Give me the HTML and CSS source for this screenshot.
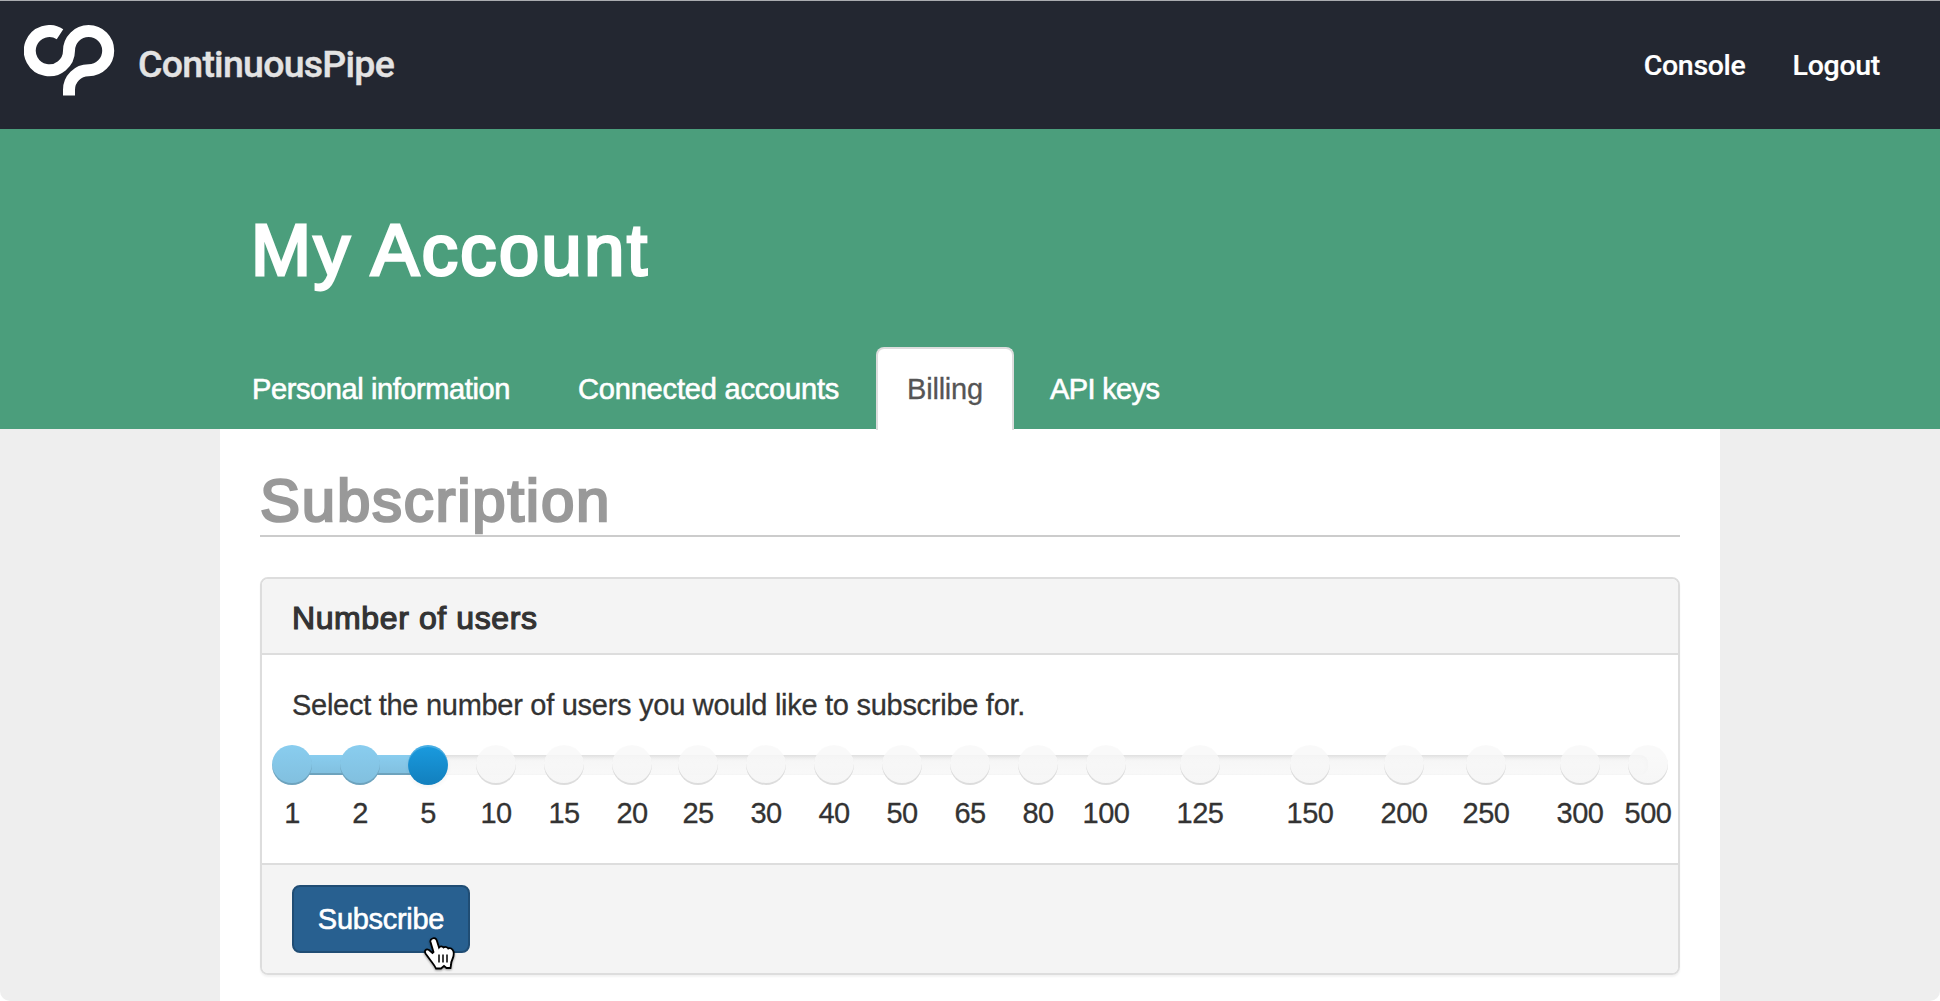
FILE: index.html
```html
<!DOCTYPE html>
<html lang="en">
<head>
<meta charset="utf-8">
<title>My Account - ContinuousPipe</title>
<link rel="stylesheet" href="styles.css">
</head>
<body>
<div class="page">
  <header class="topbar">
    <a class="brand">
      <svg class="brand-logo" width="92" height="76" viewBox="24 25 92 76" fill="none" stroke="#fff" stroke-width="12"><path d="M60 34.2A19.6 19.6 0 1 0 69 50.8A19.6 19.6 0 1 1 88.5 70.3A19.5 19.5 0 0 0 69 89.8V95.5"/></svg>
      <span class="brand-name">ContinuousPipe</span>
    </a>
    <nav class="topnav"><a class="console">Console</a><a class="logout">Logout</a></nav>
  </header>
  <section class="hero">
    <div class="container">
      <h1>My Account</h1>
      <nav class="tabs">
        <a class="tab personal">Personal information</a>
        <a class="tab connected">Connected accounts</a>
        <a class="tab active">Billing</a>
        <a class="tab keys">API keys</a>
      </nav>
    </div>
  </section>
  <main class="container content">
    <h2>Subscription</h2>
    <section class="panel">
      <h3 class="panel-heading">Number of users</h3>
      <div class="panel-body">
        <p>Select the number of users you would like to subscribe for.</p>
        <div class="slider">
          <div class="track"><div class="selection"></div></div>
          <div class="stop in"><i></i><span>1</span></div>
          <div class="stop in"><i></i><span>2</span></div>
          <div class="stop handle"><i></i><span>5</span></div>
          <div class="stop"><i></i><span>10</span></div>
          <div class="stop"><i></i><span>15</span></div>
          <div class="stop"><i></i><span>20</span></div>
          <div class="stop"><i></i><span>25</span></div>
          <div class="stop"><i></i><span>30</span></div>
          <div class="stop"><i></i><span>40</span></div>
          <div class="stop"><i></i><span>50</span></div>
          <div class="stop"><i></i><span>65</span></div>
          <div class="stop"><i></i><span>80</span></div>
          <div class="stop"><i></i><span>100</span></div>
          <div class="stop"><i></i><span>125</span></div>
          <div class="stop"><i></i><span>150</span></div>
          <div class="stop"><i></i><span>200</span></div>
          <div class="stop"><i></i><span>250</span></div>
          <div class="stop"><i></i><span>300</span></div>
          <div class="stop"><i></i><span>500</span></div>
        </div>
      </div>
      <div class="panel-footer">
        <button class="subscribe">Subscribe
          <svg class="cursor" width="34" height="38" viewBox="0 0 34 38"><path d="M8.500 2.500C10.500 1.500 12 2.500 12.800 4.500L15 11.500C16 10 18.500 10 19.500 11.500C21 10.500 23.500 11 24.300 12.500C26 11.500 28.500 12.500 29.500 15.500C30 18 29.500 21 28.500 23C27.500 25 27 26.500 27 29L26.500 32H22.500L20 30L17 32.500H12C10.500 29 8 26.500 5.500 23L1.500 17.500C0 14.500 2 12.500 5 14L8.500 17L9.500 16L6.500 6C6 4 7 3 8.500 2.500Z" fill="#fff" stroke="#000" stroke-width="1.800"/><path d="M15 18.500V26.500M19 18.500V26.500M23 18.500V26.500" stroke="#000" stroke-width="1.500"/></svg>
        </button>
      </div>
    </section>
  </main>
</div>
</body>
</html>
```
FILE: styles.css
```css
* { box-sizing: border-box; }
body { margin: 0; background: #fff; color: #333; font: 29px/40px "Liberation Sans", Arial, sans-serif; }
h1, h2, h3, p { margin: 0; font-weight: 400; }
.page { height: 1001px; overflow: hidden; background: #eee; border-radius: 0 0 10px 10px; }
.container { width: 1500px; margin: 0 auto; }

.topbar { height: 129px; background: #232731; border-top: 1px solid #aaacb0; display: flex; justify-content: space-between; align-items: flex-start; padding: 24px 60px 0 24px; font-family: Roboto, sans-serif; font-weight: 500; }
.brand { display: flex; gap: 22px; color: #e3e3e3; }
.brand-name { font-size: 37.500px; line-height: 40px; padding-top: 19px; letter-spacing: -.75px; -webkit-text-stroke: .4px; }
.topnav { display: flex; gap: 47px; color: #fff; padding-top: 21px; font-size: 28.500px; letter-spacing: -.3px; -webkit-text-stroke: .2px; }

.hero { height: 300px; background: #4b9e7c; padding-top: 81px; }
h1 { padding-left: 31px; font-size: 72px; line-height: 80px; color: #fff; letter-spacing: 2.650px; -webkit-text-stroke: 3px; }
.tabs { margin-top: 57px; display: grid; grid-template-columns: 322px 326px 138px auto; gap: 4px; color: #fff; }
.tab { height: 82px; padding: 20px 0 0 30px; border: 2px solid transparent; border-bottom: 0; white-space: nowrap; -webkit-text-stroke: .6px; letter-spacing: -.4px; }
.tab.connected { letter-spacing: -.18px; }
.tab.keys { letter-spacing: -.65px; }
.tab.active { height: 83px; padding-left: 29px; color: #555; background: #fff; border-color: #ddd; border-radius: 8px 8px 0 0; -webkit-text-stroke: .3px; letter-spacing: -.2px; }

.content { height: 572px; background: #fff; padding: 43px 40px 0; }
h2 { font-size: 60px; line-height: 58px; color: #999; letter-spacing: 1.750px; -webkit-text-stroke: 2.500px; padding-bottom: 5px; border-bottom: 2px solid #ccc; margin-bottom: 40px; }
.panel { border: 2px solid #ddd; border-radius: 8px; box-shadow: 0 2px 2px rgba(0,0,0,.05); }
.panel-heading { background: #f4f4f4; border-bottom: 2px solid #ddd; border-radius: 6px 6px 0 0; padding: 22px 30px 18px; font-size: 32px; line-height: 34px; letter-spacing: .6px; -webkit-text-stroke: 1.200px; }
.panel-body { padding: 30px; }
.panel-body p { margin-bottom: 20px; letter-spacing: -.28px; -webkit-text-stroke: .3px; }
.panel-footer { background: #f4f4f4; border-top: 2px solid #ddd; border-radius: 0 0 6px 6px; padding: 20px 30px; }

.slider { position: relative; height: 88px; display: grid; grid-template-columns: repeat(5, 68px) 66px repeat(6, 68px) 94px 110px 94px 82px 94px 68px 0; }
.track { position: absolute; top: 10px; left: 0; width: 1356px; height: 20px; border-radius: 8px; background: linear-gradient(#f5f5f5, #f9f9f9); box-shadow: inset 0 2px 4px rgba(0,0,0,.1); }
.selection { width: 136px; height: 20px; border-radius: 8px; background: linear-gradient(#89cdef, #81bfde); box-shadow: inset 0 -2px 0 rgba(0,0,0,.15); }
.stop { position: relative; width: 0; display: flex; flex-direction: column; align-items: center; gap: 8px; }
.stop i { flex: none; width: 40px; height: 40px; border-radius: 50%; background: linear-gradient(#f9f9f9, #f5f5f5); box-shadow: inset 0 -2px 0 rgba(0,0,0,.12); opacity: .85; }
.stop span { letter-spacing: -.5px; -webkit-text-stroke: .3px; }
.stop.in i { background: linear-gradient(#89cdef, #81bfde); box-shadow: inset 0 -2px 0 rgba(0,0,0,.15); opacity: 1; }
.stop.handle i { background: linear-gradient(#1a9bdf, #127fbd); box-shadow: inset 0 2px 0 rgba(255,255,255,.2), 0 2px 4px rgba(0,0,0,.05); opacity: 1; }

.subscribe { position: relative; display: block; width: 178px; height: 68px; padding: 0; border: 2px solid #204d74; border-radius: 8px; background: #286090; color: #fff; font: inherit; text-align: center; -webkit-text-stroke: .6px; letter-spacing: -.3px; }
.cursor { position: absolute; left: 130px; top: 49px; filter: drop-shadow(0 1px 1px rgba(0,0,0,.4)); }
```
